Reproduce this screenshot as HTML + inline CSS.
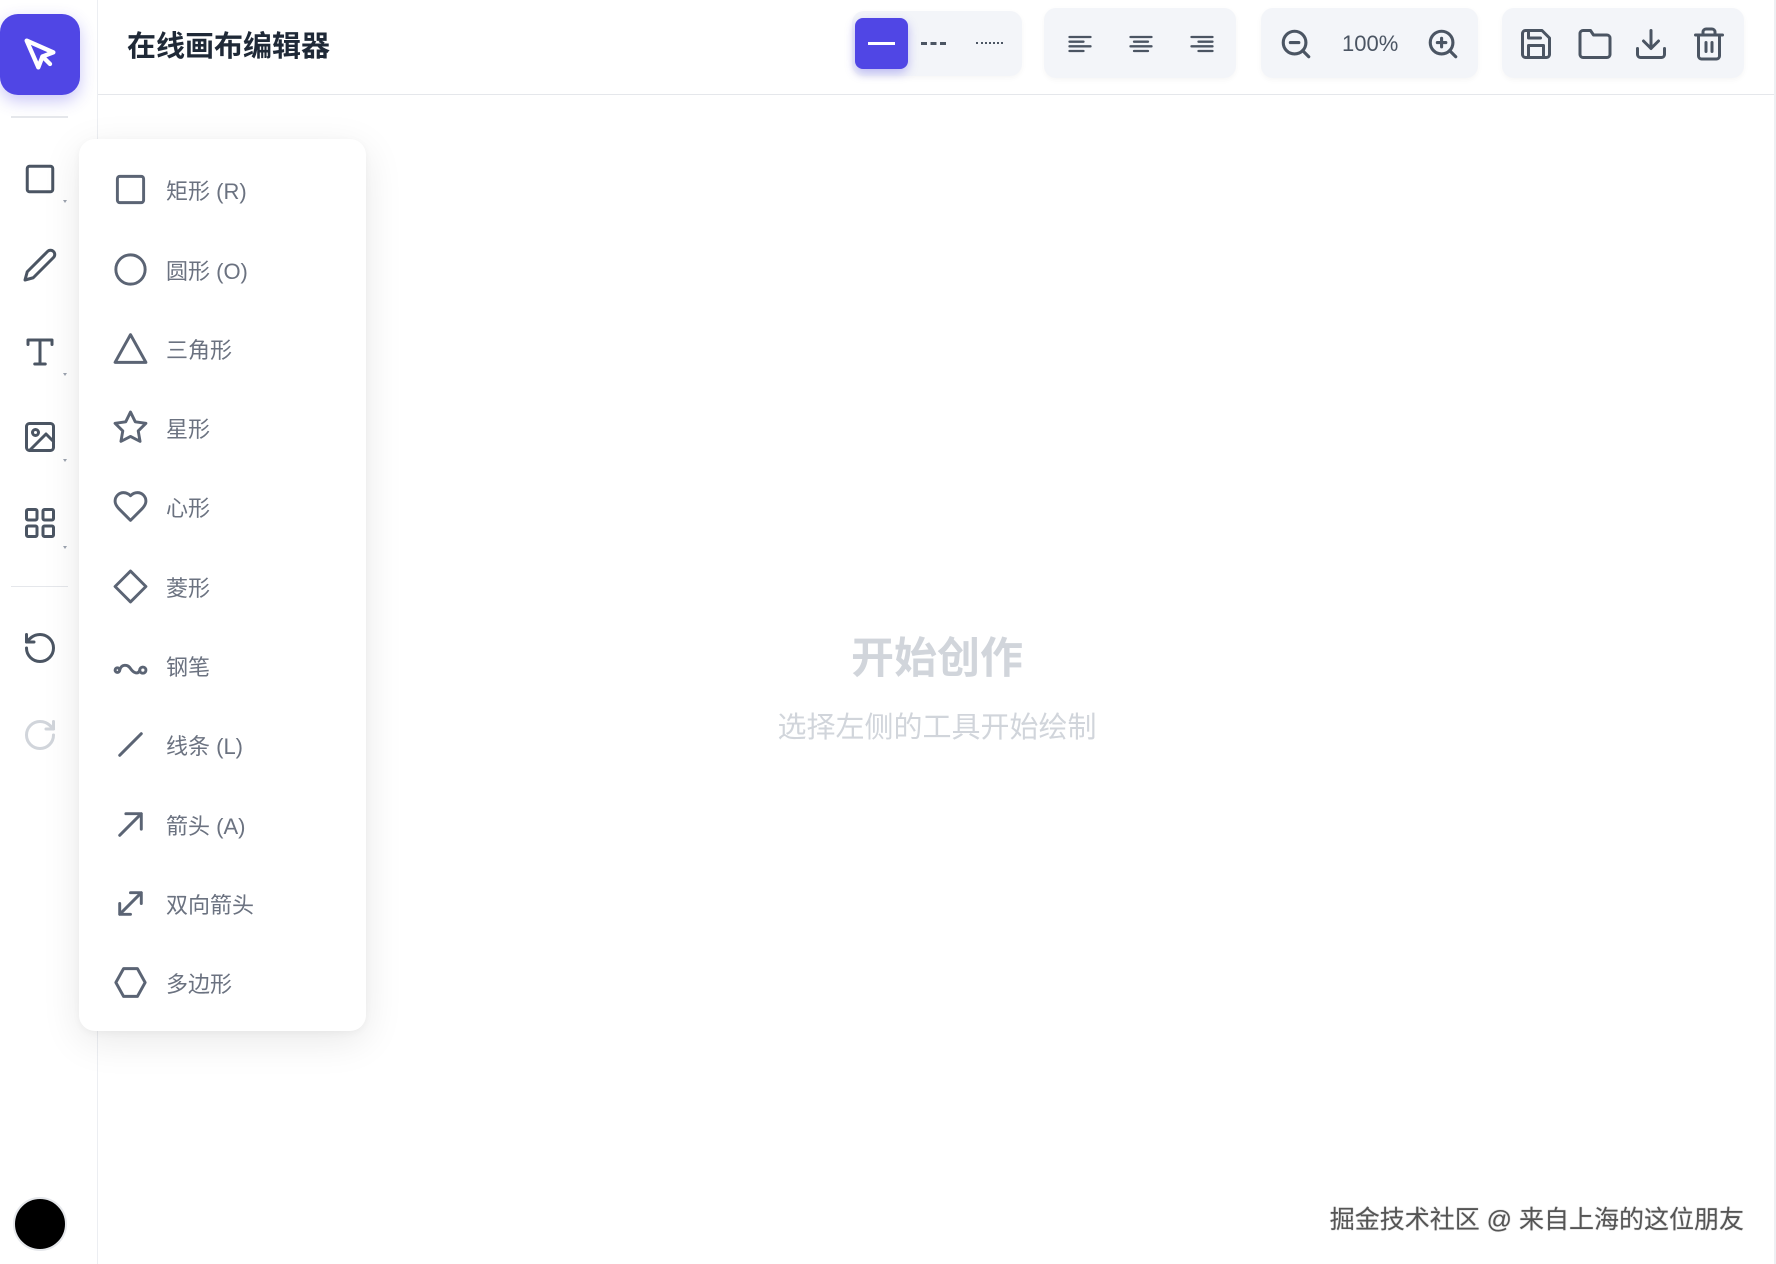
<!DOCTYPE html>
<html><head><meta charset="utf-8"><style>
*{margin:0;padding:0;box-sizing:border-box}
body{width:1776px;height:1264px;background:#fff;position:relative;overflow:hidden;font-family:"Liberation Sans","Noto Sans CJK SC",sans-serif}
.abs{position:absolute}
svg{position:absolute;fill:none;stroke-linecap:round;stroke-linejoin:round}
.side svg{stroke:#4b5563;stroke-width:2}
.item{position:absolute;left:0;width:287px;height:40px}
.item svg{left:33px;top:1px;width:37px;height:37px;stroke:#5b6474;stroke-width:1.9}
.item span{position:absolute;left:87px;top:4px;font-size:22px;color:#6b7280;white-space:nowrap}
.grp{position:absolute;background:#f3f5f9;border-radius:12px;box-shadow:0 2px 6px rgba(0,0,0,.04)}
.tb svg{stroke:#4b5563;stroke-width:2}
.caret{position:absolute;width:0;height:0;border-left:2px solid transparent;border-right:2px solid transparent;border-top:3px solid #9ca3af}
</style></head><body>
<div class="abs" style="left:97px;top:0;width:1px;height:1264px;background:#eceef2"></div>
<div class="abs" style="left:98px;top:94px;width:1678px;height:1px;background:#e5e7eb"></div>
<div class="abs" style="left:1774px;top:0;width:2px;height:1264px;background:#eef0f3"></div>
<div class="abs" style="left:0;top:14px;width:80px;height:81px;background:#5046e5;border-radius:18px;box-shadow:0 6px 16px rgba(80,70,229,.3)"></div>
<svg style="left:20px;top:34px;width:40px;height:40px;stroke:#fff;stroke-width:2.6" viewBox="0 0 24 24"><path d="M4 4l7 16 2.5-6.5L20 11z"/><path d="M13.5 13.5L18 18"/></svg>
<div class="abs" style="left:11px;top:116px;width:57px;height:2px;background:#e5e7eb"></div>
<div class="side">
<svg style="left:22px;top:161px;width:36px;height:36px" viewBox="0 0 24 24"><rect x="3.5" y="3.5" width="17" height="17" rx="1.5"/></svg>
<div class="caret" style="left:63px;top:200px"></div>
<svg style="left:22px;top:247px;width:36px;height:36px" viewBox="0 0 24 24"><path d="M17 3a2.8 2.8 0 0 1 4 4L7.5 20.5 2 22l1.5-5.5z"/></svg>
<svg style="left:22px;top:334px;width:36px;height:36px" viewBox="0 0 24 24"><path d="M4 7V4h16v3M12 4v16M8.5 20h7"/></svg>
<div class="caret" style="left:63px;top:373px"></div>
<svg style="left:22px;top:419px;width:36px;height:36px" viewBox="0 0 24 24"><rect x="3" y="3" width="18" height="18" rx="2"/><circle cx="9" cy="9" r="2"/><path d="M21 15l-5-5L5 21"/></svg>
<div class="caret" style="left:63px;top:459px"></div>
<svg style="left:22px;top:505px;width:36px;height:36px" viewBox="0 0 24 24"><rect x="3" y="3" width="7" height="7" rx="1"/><rect x="14" y="3" width="7" height="7" rx="1"/><rect x="3" y="14" width="7" height="7" rx="1"/><rect x="14" y="14" width="7" height="7" rx="1"/></svg>
<div class="caret" style="left:63px;top:546px"></div>
<div class="abs" style="left:11px;top:586px;width:57px;height:1px;background:#e5e7eb"></div>
<svg style="left:22px;top:630px;width:36px;height:36px" viewBox="0 0 24 24"><path d="M3 12a9 9 0 1 0 9-9 9.75 9.75 0 0 0-6.74 2.74L3 8"/><path d="M3 3v5h5"/></svg>
<svg style="left:22px;top:717px;width:36px;height:36px;stroke:#d1d5db" viewBox="0 0 24 24"><path d="M21 12a9 9 0 1 1-9-9c2.52 0 4.93 1 6.74 2.74L21 8"/><path d="M21 3v5h-5"/></svg>
</div>
<div class="abs" style="left:13px;top:1197px;width:54px;height:54px;border-radius:50%;background:#000;border:2px solid #e5e7eb"></div>
<div class="abs" style="left:127px;top:23px;font-size:29px;font-weight:bold;color:#1f2937">在线画布编辑器</div>
<div class="tb">
<div class="grp" style="left:852px;top:11px;width:170px;height:65px"></div>
<div class="abs" style="left:855px;top:18px;width:53px;height:51px;background:#5046e5;border-radius:8px;box-shadow:0 4px 10px rgba(80,70,229,.35)"></div>
<div class="abs" style="left:868px;top:42px;width:27px;height:3px;background:#fff"></div>
<div class="abs" style="left:921px;top:42px;width:25px;height:0;border-top:3px dashed #4b5563"></div>
<div class="abs" style="left:976px;top:42px;width:27px;height:0;border-top:2px dotted #4b5563"></div>
<div class="grp" style="left:1044px;top:8px;width:192px;height:70px"></div>
<svg style="left:1066px;top:30px;width:28px;height:28px" viewBox="0 0 24 24"><path d="M3 6h18M3 10h12M3 14h18M3 18h12"/></svg>
<svg style="left:1127px;top:30px;width:28px;height:28px" viewBox="0 0 24 24"><path d="M3 6h18M6 10h12M3 14h18M6 18h12"/></svg>
<svg style="left:1188px;top:30px;width:28px;height:28px" viewBox="0 0 24 24"><path d="M3 6h18M9 10h12M3 14h18M9 18h12"/></svg>
<div class="grp" style="left:1261px;top:8px;width:217px;height:70px"></div>
<svg style="left:1279px;top:27px;width:34px;height:34px;stroke-width:2.2" viewBox="0 0 24 24"><circle cx="11" cy="11" r="8"/><path d="M21 21l-4.3-4.3M8 11h6"/></svg>
<div class="abs" style="left:1342px;top:31px;font-size:22px;color:#4b5563">100%</div>
<svg style="left:1426px;top:27px;width:34px;height:34px;stroke-width:2.2" viewBox="0 0 24 24"><circle cx="11" cy="11" r="8"/><path d="M21 21l-4.3-4.3M8 11h6M11 8v6"/></svg>
<div class="grp" style="left:1502px;top:8px;width:242px;height:70px"></div>
<svg style="left:1518px;top:26px;width:36px;height:36px" viewBox="0 0 24 24"><path d="M19 21H5a2 2 0 0 1-2-2V5a2 2 0 0 1 2-2h11l5 5v11a2 2 0 0 1-2 2z"/><path d="M17 21v-8H7v8M7 3v5h8"/></svg>
<svg style="left:1577px;top:26px;width:36px;height:36px" viewBox="0 0 24 24"><path d="M22 19a2 2 0 0 1-2 2H4a2 2 0 0 1-2-2V5a2 2 0 0 1 2-2h5l2 3h9a2 2 0 0 1 2 2z"/></svg>
<svg style="left:1633px;top:26px;width:36px;height:36px" viewBox="0 0 24 24"><path d="M21 15v4a2 2 0 0 1-2 2H5a2 2 0 0 1-2-2v-4M7 10l5 5 5-5M12 15V3"/></svg>
<svg style="left:1691px;top:26px;width:36px;height:36px" viewBox="0 0 24 24"><path d="M3 6h18M19 6v14a2 2 0 0 1-2 2H7a2 2 0 0 1-2-2V6M8 6V4a2 2 0 0 1 2-2h4a2 2 0 0 1 2 2v2M10 11v6M14 11v6"/></svg>
</div>
<div class="abs" style="left:737px;top:624px;width:400px;text-align:center;font-size:43px;font-weight:bold;color:#d1d5db">开始创作</div>
<div class="abs" style="left:637px;top:704px;width:600px;text-align:center;font-size:29px;color:#d1d5db">选择左侧的工具开始绘制</div>
<div class="abs" style="right:32px;top:1200px;font-size:25px;color:#555;text-shadow:0 0 2px #fff,0 0 1px #555">掘金技术社区 @ 来自上海的这位朋友</div>
<div class="abs" style="left:79px;top:139px;width:287px;height:892px;background:#fff;border-radius:16px;box-shadow:0 10px 40px rgba(0,0,0,.09),0 2px 8px rgba(0,0,0,.04)">
<div class="item" style="top:31px"><svg viewBox="0 0 24 24"><rect x="3.5" y="3.5" width="17" height="17" rx="1.5"/></svg><span>矩形 (R)</span></div>
<div class="item" style="top:111px"><svg viewBox="0 0 24 24"><circle cx="12" cy="12" r="9.5"/></svg><span>圆形 (O)</span></div>
<div class="item" style="top:190px"><svg viewBox="0 0 24 24"><path d="M12 3L2 21h20z"/></svg><span>三角形</span></div>
<div class="item" style="top:269px"><svg viewBox="0 0 24 24"><path d="M12 2l3.1 6.3 6.9 1-5 4.9 1.2 6.8L12 17.8 5.8 21l1.2-6.8-5-4.9 6.9-1z"/></svg><span>星形</span></div>
<div class="item" style="top:348px"><svg viewBox="0 0 24 24"><path d="M19 14c1.5-1.5 3-3.2 3-5.5A5.5 5.5 0 0 0 16.5 3c-1.8 0-3 .5-4.5 2-1.5-1.5-2.7-2-4.5-2A5.5 5.5 0 0 0 2 8.5c0 2.3 1.5 4 3 5.5l7 7z"/></svg><span>心形</span></div>
<div class="item" style="top:428px"><svg viewBox="0 0 24 24"><path d="M12 2l10 10-10 10L2 12z"/></svg><span>菱形</span></div>
<div class="item" style="top:507px"><svg viewBox="0 0 24 24"><circle cx="3.5" cy="15" r="1.5"/><path d="M5 15c1-4 5-4 7-1s5 4 6 1"/><circle cx="20" cy="15" r="2"/></svg><span>钢笔</span></div>
<div class="item" style="top:586px"><svg viewBox="0 0 24 24"><path d="M5 19L19 5"/></svg><span>线条 (L)</span></div>
<div class="item" style="top:666px"><svg viewBox="0 0 24 24"><path d="M5 19L19 5M9 5h10v10"/></svg><span>箭头 (A)</span></div>
<div class="item" style="top:745px"><svg viewBox="0 0 24 24"><path d="M5 19L19 5M12 5h7v7M5 12v7h7"/></svg><span>双向箭头</span></div>
<div class="item" style="top:824px"><svg viewBox="0 0 24 24"><path d="M12 2.5l9 5v9l-9 5-9-5v-9z" transform="rotate(90 12 12)"/></svg><span>多边形</span></div>
</div>
</body></html>
